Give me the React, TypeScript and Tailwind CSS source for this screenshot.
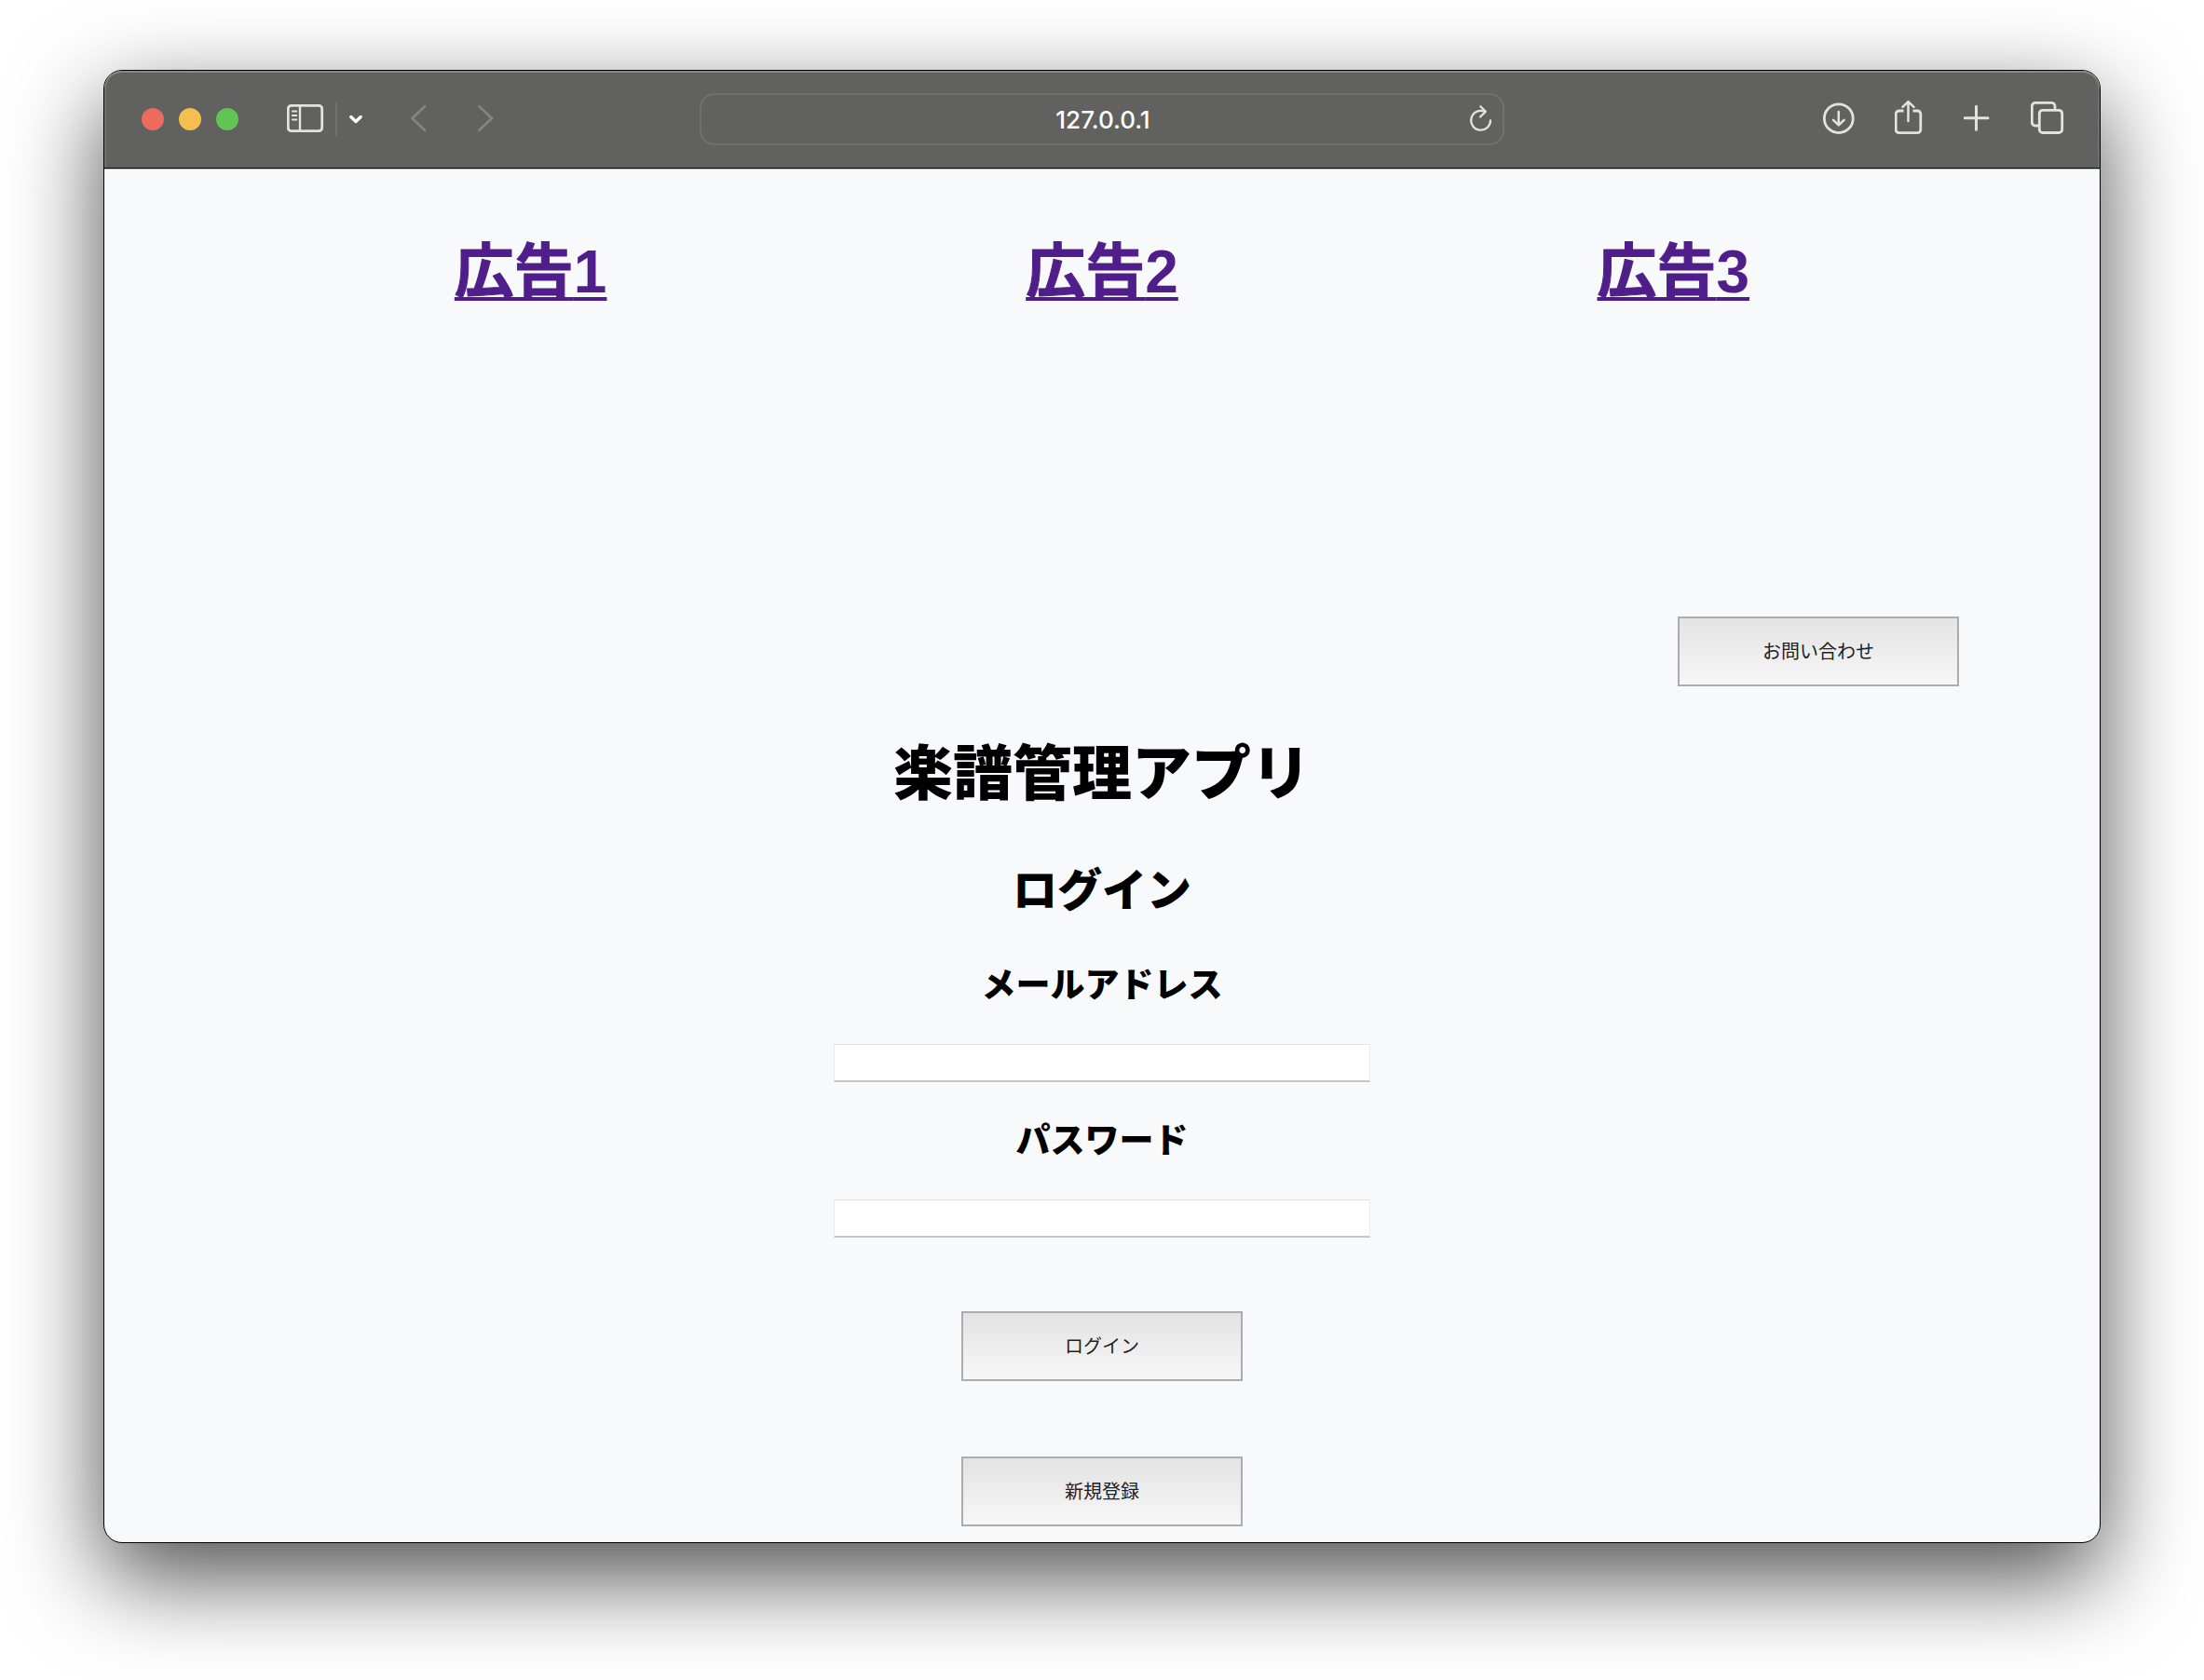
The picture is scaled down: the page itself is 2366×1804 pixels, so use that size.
import React from "react";

const adNumbers = [1, 2, 3];

const fieldClass =
  "block h-[41px] w-[576px] max-w-full border border-x-[#ebecee] border-t-[#e2e3e5] border-b-2 border-b-[#c5c6c8] bg-white px-2 text-xl outline-none";

function Icon({ width, label, children }: { width: number; label: string; children: React.ReactNode }) {
  return (
    <button type="button" aria-label={label} className="block shrink-0">
      <svg
        width={width}
        height={40}
        viewBox={`0 0 ${width} 40`}
        fill="none"
        stroke="currentColor"
        strokeWidth={2.8}
        strokeLinecap="round"
        strokeLinejoin="round"
      >
        {children}
      </svg>
    </button>
  );
}

function Toolbar() {
  return (
    <header className="grid h-[105px] grid-cols-[1fr_minmax(0,864px)_1fr] items-center rounded-t-[19px] border-b border-black bg-[#61615f] text-[#e2e2e1] shadow-[inset_0_2px_0_#878784,inset_2px_0_0_#71716e,inset_-2px_0_0_#71716e]">
      <div className="flex items-center pl-10">
        <div className="flex gap-4">
          <button type="button" aria-label="閉じる" className="size-6 rounded-full bg-[#ed6a5e]" />
          <button type="button" aria-label="しまう" className="size-6 rounded-full bg-[#f5bf4f]" />
          <button type="button" aria-label="拡大" className="size-6 rounded-full bg-[#61c554]" />
        </div>
        <div className="ml-[52px] flex items-center gap-3">
          <Icon width={40} label="サイドバー">
            <rect x="1.3" y="5.3" width="36.4" height="27.4" rx="3.5" />
            <path d="M14 5.5v27" strokeWidth="2.4" />
            <path d="M5.8 11.5h4.6M5.8 16h4.6M5.8 20.5h4.6" strokeWidth="1.8" />
          </Icon>
          <span className="h-9 w-0.5 bg-[#71716f]" />
          <span className="text-white">
            <Icon width={16} label="タブグループ">
              <path d="M2.8 17.5l5.2 5 5.2-5" strokeWidth="3.4" />
            </Icon>
          </span>
        </div>
        <div className="ml-[50px] flex gap-[54px] text-[#848482]">
          <Icon width={18} label="戻る">
            <path d="M16 6.3L2.5 19 16 31.7" />
          </Icon>
          <Icon width={18} label="進む">
            <path d="M2.5 6.3L16 19 2.5 31.7" />
          </Icon>
        </div>
      </div>
      <div className="grid h-14 grid-cols-[1fr_auto_1fr] items-center rounded-2xl border-2 border-[#71716f] pr-2.5">
        <span />
        <span className="pt-0.5 pl-3 font-['Inter',sans-serif] text-[26px] leading-8 font-medium text-white">
          127.0.0.1
        </span>
        <span className="justify-self-end pt-0.5">
          <Icon width={26} label="再読み込み">
            <path d="M16.5 10.6A10.4 10.4 0 1 0 23 20.3" strokeWidth="2.3" />
            <path d="M12.3 5.2l5.6 5.5-5.8 5.8" strokeWidth="2.3" />
          </Icon>
        </span>
      </div>
      <div className="flex justify-end gap-[42px] pr-[38px]">
        <Icon width={36} label="ダウンロード">
          <circle cx="17.8" cy="19.2" r="15.4" />
          <path d="M17.8 12v14M12 20.8l5.8 5.6 5.8-5.6" strokeWidth="2.5" />
        </Icon>
        <Icon width={32} label="共有">
          <path d="M9.5 11H4.6A3.4 3.4 0 0 0 1.2 14.4V31.3A3.4 3.4 0 0 0 4.6 34.7H24.4A3.4 3.4 0 0 0 27.8 31.3V14.4A3.4 3.4 0 0 0 24.4 11H19.5" strokeLinecap="butt" />
          <path d="M14.5 22V1.5M8.5 6.8l6-5.6 6 5.6" strokeWidth="2.5" />
        </Icon>
        <Icon width={30} label="新規タブ">
          <path d="M13.5 6.3v25M1.2 18.8h24.8" strokeWidth="3" />
        </Icon>
        <Icon width={36} label="タブの概要">
          <path d="M26 9V6a3.6 3.6 0 0 0-3.6-3.6H4.9A3.6 3.6 0 0 0 1.3 6v17.4A3.6 3.6 0 0 0 4.9 27H9" strokeLinecap="butt" />
          <rect x="9.3" y="10.3" width="24.4" height="24.2" rx="3.6" />
        </Icon>
      </div>
    </header>
  );
}

function PageButton({ children, type = "button" }: { children: React.ReactNode; type?: "button" | "submit" }) {
  return (
    <button
      type={type}
      className="block h-[75px] w-[302px] border-2 border-[#acacae] bg-linear-to-b from-[#e3e3e3] to-[#f7f7f7] text-xl text-[#222222]"
    >
      {children}
    </button>
  );
}

export default function App() {
  return (
    <div className="min-h-screen bg-white px-[111px] pt-[75px] pb-[147px] font-['Liberation_Sans','Noto_Sans_CJK_JP',sans-serif] text-black">
      <div className="rounded-[20px] border border-black bg-[#f8f9fb] shadow-[0_36px_100px_rgba(0,0,0,0.7)]">
        <Toolbar />
        <main className="border-t border-[#b4b5b6] px-[151px] pb-[17px]">
          <nav className="grid h-[480px] grid-cols-3 pt-[62px] text-center text-[64px] leading-[96px] font-bold">
            {adNumbers.map((n) => (
              <div key={n}>
                <a
                  href="#"
                  className="text-[#501e8a] underline decoration-4 underline-offset-[5px] [text-decoration-skip-ink:none]"
                >
                  <span className="[-webkit-text-stroke:1px_#501e8a]">広告</span>
                  {n}
                </a>
              </div>
            ))}
          </nav>
          <div className="flex justify-end">
            <PageButton>お問い合わせ</PageButton>
          </div>
          <form className="flex flex-col items-center" onSubmit={(e) => e.preventDefault()}>
            <h1 className="mt-[46px] text-[64px] leading-[96px] font-black">楽譜管理アプリ</h1>
            <h2 className="mt-[42px] text-5xl leading-[72px] font-black">ログイン</h2>
            <label htmlFor="email" className="mt-[38px] text-[37px] leading-[56px] font-black">
              メールアドレス
            </label>
            <input id="email" type="email" className={`${fieldClass} mt-[34px]`} />
            <label htmlFor="password" className="mt-9 text-[37px] leading-[56px] font-black">
              パスワード
            </label>
            <input id="password" type="password" className={`${fieldClass} mt-[34px]`} />
            <div className="mt-[79px] flex flex-col gap-[81px]">
              <PageButton type="submit">ログイン</PageButton>
              <PageButton>新規登録</PageButton>
            </div>
          </form>
        </main>
      </div>
    </div>
  );
}
